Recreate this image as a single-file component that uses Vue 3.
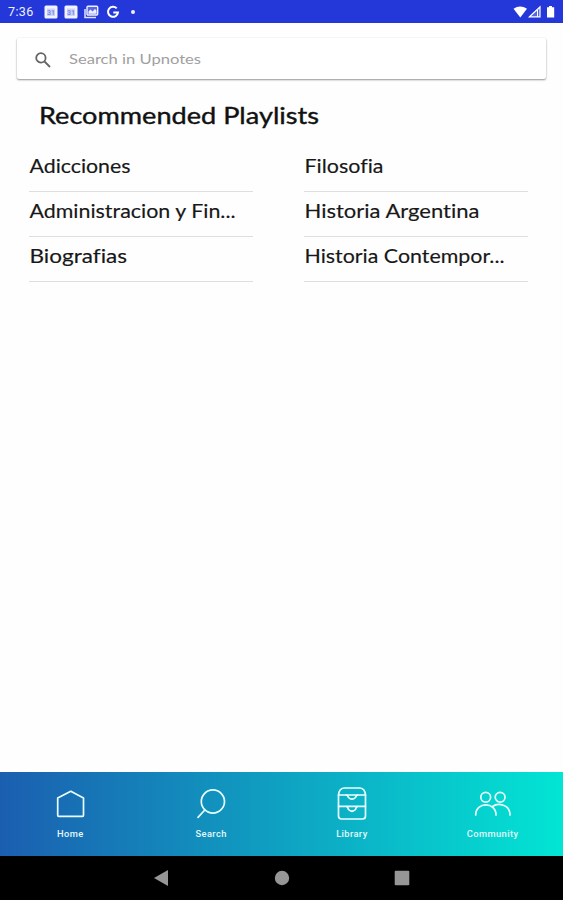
<template>
  <div class="screen">
    <header class="status-bar">
      <span class="clock">7:36</span>
      <div class="notifications">
        <svg v-for="n in 2" :key="n" width="14" height="14" viewBox="0 0 14 14">
          <rect x="0.5" y="0.5" width="13" height="13" rx="1.5" fill="#f1f3ff" />
          <rect x="3" y="3.5" width="8" height="7.5" fill="#cdd4f9" />
          <text x="7" y="10" text-anchor="middle" font-size="7" font-weight="700" fill="#7f8be8">31</text>
        </svg>
        <svg width="15" height="14" viewBox="0 0 15 14">
          <path d="M1 4v8.5h11" fill="none" stroke="#dfe4ff" stroke-width="1.5" />
          <rect x="3" y="1.3" width="10.7" height="8.7" rx="1" fill="#5968e2" stroke="#eef0ff" stroke-width="1.4" />
          <path d="M4.5 8.7V6.5L6.5 4.5L8.500 6.500L11 4L12.500 5.500V8.700Z" fill="#eef0ff" />
        </svg>
        <svg width="14" height="14" viewBox="0 0 14 14">
          <path d="M10.700 3.400A5 5 0 1 0 12 7.400H7.300" fill="none" stroke="#fff" stroke-width="2" />
        </svg>
        <i class="dot"></i>
      </div>
      <svg class="signals" width="44" height="14" viewBox="0 0 44 14">
        <path d="M1.500 3.700Q8 -0.700 15 3.700L8.300 12.500z" fill="#fff" />
        <path d="M17.500 11.800L28 2v9.800z" fill="#5566e4" stroke="#fff" stroke-width="1.200" />
        <path d="M25.500 5v7" stroke="#fff" stroke-width="1" />
        <path d="M35 2.200h2V1h3v1.200h2.200V12.500h-7.200z" fill="#fff" />
      </svg>
    </header>

    <main class="content">
      <label class="search-box">
        <svg class="search-icon" width="18" height="18" viewBox="0 0 18 18">
          <circle cx="6.900" cy="6.900" r="4.700" />
          <path d="M10.500 10.500L16 16" />
        </svg>
        <svg class="label label-search" width="140" height="22">
          <text x="0" y="16" textLength="132" lengthAdjust="spacingAndGlyphs">Search in Upnotes</text>
        </svg>
      </label>

      <h1 class="title">
        <svg class="label label-title" width="290" height="34">
          <text x="0" y="25" textLength="280" lengthAdjust="spacingAndGlyphs">Recommended Playlists</text>
        </svg>
      </h1>

      <div class="playlists">
        <ul v-for="(column, i) in columns" :key="i" class="column">
          <li v-for="item in column" :key="item.name" class="playlist">
            <svg class="label label-item" width="224" height="30">
              <text x="0.500" y="26" :textLength="item.width" lengthAdjust="spacingAndGlyphs">{{ item.name }}</text>
            </svg>
          </li>
        </ul>
      </div>
    </main>

    <nav class="tab-bar">
      <a v-for="tab in tabs" :key="tab.name" class="tab">
        <svg class="tab-icon" width="38" height="36" viewBox="0 0 38 36">
          <path v-for="d in tab.paths" :key="d" :d="d" />
        </svg>
        <span class="tab-name">{{ tab.name }}</span>
      </a>
    </nav>

    <footer class="system-bar">
      <svg width="16" height="18" viewBox="0 0 16 18"><path d="M0 9L14 1v16z" /></svg>
      <svg width="16" height="18" viewBox="0 0 16 18"><circle cx="8" cy="9" r="7.200" /></svg>
      <svg width="16" height="18" viewBox="0 0 16 18"><rect x="0.700" y="1.700" width="14.600" height="14.600" rx="1" /></svg>
    </footer>
  </div>
</template>

<script setup>
// width: drawn length of the name in px
const columns = [
  [
    { name: 'Adicciones', width: 101 },
    { name: 'Administracion y Fin...', width: 206 },
    { name: 'Biografias', width: 97.5 }
  ],
  [
    { name: 'Filosofia', width: 79 },
    { name: 'Historia Argentina', width: 175 },
    { name: 'Historia Contempor...', width: 200 }
  ]
];

const tabs = [
  {
    name: 'Home',
    paths: ['M6.700 12L19.800 5.300L32.500 12V29.300Q32.500 30.300 31.500 30.300H7.700Q6.700 30.300 6.700 29.300Z']
  },
  {
    name: 'Search',
    paths: ['M9.300 15.500a11.600 11.600 0 1 1 23.200 0a11.600 11.600 0 1 1 -23.200 0', 'M12.800 24L6 31.300']
  },
  {
    name: 'Library',
    paths: [
      'M5.500 9H32.500V30Q32.500 33 29.500 33H8.500Q5.500 33 5.500 30Z',
      'M5.500 9Q6 2.500 11 2H27Q32 2.500 32.500 9',
      'M5.500 20.300H32.500',
      'M13.500 9.200Q15 9.500 15.500 11.500Q19 15 22.500 11.500Q23 9.500 24.500 9.200',
      'M13.500 20.500Q15 20.800 15.500 23.500Q19 27 22.500 23.500Q23 20.800 24.500 20.500'
    ]
  },
  {
    name: 'Community',
    paths: [
      'M6.800 11.200a4.900 4.900 0 1 1 9.800 0a4.900 4.900 0 1 1 -9.800 0',
      'M21.200 11.200a4.900 4.900 0 1 1 9.800 0a4.900 4.900 0 1 1 -9.800 0',
      'M1.700 29C1.700 15.500 22 15.500 22 29',
      'M18.500 20.500C24 16.500 36 18.500 36 29'
    ]
  }
];
</script>

<style>
body {
  margin: 0;
  background: #fefefe;
}
</style>

<style scoped>
.screen {
  display: flex;
  flex-direction: column;
  height: 900px;
  overflow: hidden;
  font-family: Lato, sans-serif;
  background: #fefefe;
}

svg {
  display: block;
  flex: none;
}

/* Status bar */
.status-bar {
  display: flex;
  align-items: center;
  height: 23px;
  padding: 1px 7px 0 8px;
  box-sizing: border-box;
  flex: none;
  color: #eef0ff;
  background: #2438d9;
}

.clock {
  width: 36px;
  font: 12.5px/20px Roboto, sans-serif;
  letter-spacing: 0.4px;
}

.notifications {
  display: flex;
  align-items: center;
  gap: 6.2px;
  font-family: Roboto, sans-serif;
}

.dot {
  width: 4px;
  height: 4px;
  margin-left: 5px;
  border-radius: 50%;
  background: #eef0ff;
}

.signals {
  margin-left: auto;
}

/* Page */
.content {
  flex: 1;
  min-height: 0;
  padding-top: 15px;
}

.search-box {
  display: flex;
  align-items: center;
  height: 41px;
  margin: 0 17px;
  padding-left: 17px;
  border-radius: 2px;
  background: #fff;
  box-shadow: 0 1px 2px rgba(0, 0, 0, 0.42), 0 0 2px rgba(0, 0, 0, 0.05);
}

.search-icon {
  margin-top: 3px;
  margin-right: 17px;
  fill: none;
  stroke: #656565;
  stroke-width: 1.8;
}

.label {
  overflow: visible;
  font-variant-ligatures: none;
}

.label-search {
  font-size: 14px;
  fill: #a0a0a0;
}

.title {
  margin: 20px 0 0 39px;
  font-weight: 400;
}

.label-title {
  font-size: 23.5px;
  fill: #111;
  stroke: #111;
  stroke-width: 0.4px;
}

.playlists {
  display: flex;
  gap: 51px;
  padding: 14px 0 0 29px;
}

.column {
  width: 224px;
  margin: 0;
  padding: 0;
  list-style: none;
}

.playlist {
  height: 45px;
  box-sizing: border-box;
  border-bottom: 1px solid #dfdfdf;
}

.label-item {
  font-size: 18.5px;
  fill: #181818;
  stroke: #181818;
  stroke-width: 0.15px;
}

/* Bottom tabs */
.tab-bar {
  display: grid;
  grid-template-columns: repeat(4, 1fr);
  height: 84px;
  flex: none;
  background: linear-gradient(90deg, #1b5eb0 0%, #02e5d4 100%);
}

.tab {
  display: flex;
  flex-direction: column;
  align-items: center;
  padding-top: 14px;
}

.tab-icon {
  fill: none;
  stroke: #e9ffff;
  stroke-width: 1.7;
  stroke-linecap: round;
  stroke-linejoin: round;
}

.tab-name {
  margin-top: 6px;
  color: #e3f9fb;
  font: 500 9.3px/12px Roboto, sans-serif;
  letter-spacing: 0.4px;
}

/* Android navigation */
.system-bar {
  display: flex;
  align-items: center;
  justify-content: center;
  gap: 104px;
  height: 44px;
  flex: none;
  background: #000;
  fill: #969696;
}
</style>
